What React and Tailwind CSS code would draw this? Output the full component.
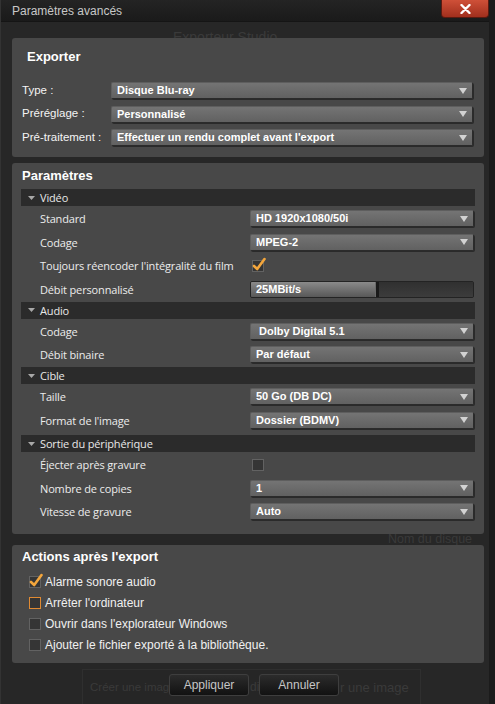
import React from "react";

const SEGOE = "font-['Open_Sans','Noto_Sans',sans-serif] text-[11px] tracking-[-0.15px]";

function Arrow() {
  return (
    <svg width="8" height="6" viewBox="0 0 8 6" className="shrink-0">
      <polygon points="0,0 8,0 4,6" fill="#d2d2d2" />
    </svg>
  );
}

function Dropdown({ value, wide, extraPad }) {
  return (
    <div
      className={`h-[17px] flex items-center justify-between rounded-[2px] border border-[#2b2b2b] border-t-[#5e5e5e] border-l-[#5e5e5e] bg-linear-to-b from-[#747474] to-[#616161] shadow-[1px_1px_0_#2a2a2a] pr-[5px] text-[11px] font-bold text-white font-['Liberation_Sans',Arial,sans-serif] leading-none ${
        extraPad ? "pl-[8px]" : "pl-[5px]"
      } ${wide ? "w-[362px]" : "w-[224px]"}`}
    >
      <span className="whitespace-nowrap">{value}</span>
      <Arrow />
    </div>
  );
}

function CheckMark() {
  return (
    <svg
      width="14"
      height="14"
      viewBox="0 0 14 14"
      className="absolute left-[-1px] top-[-4px]"
    >
      <path
        d="M2 9 L5.2 12 L12.5 2"
        fill="none"
        stroke="#f3a63c"
        strokeWidth="2.6"
        strokeLinecap="round"
        strokeLinejoin="round"
      />
    </svg>
  );
}

function Box({ checked, orange }) {
  return (
    <div
      className={`relative w-[12px] h-[12px] shrink-0 bg-[#353535] ${
        orange ? "border-[1.5px] border-[#e08a32]" : "border border-[#626262]"
      }`}
    >
      {checked && <CheckMark />}
    </div>
  );
}

function SectionHeader({ title }) {
  return (
    <div className="h-[17px] bg-[#2b2b2b] flex items-center pl-[7px]">
      <svg width="7" height="4" viewBox="0 0 7 4" className="shrink-0">
        <polygon points="0,0 7,0 3.5,4" fill="#a8a8a8" />
      </svg>
      <span className={`ml-[5px] text-[#e8e8e8] ${SEGOE} leading-none`}>{title}</span>
    </div>
  );
}

function Row({ label, children }) {
  return (
    <div className="h-[17px] flex items-center pl-[19px]">
      <div className={`w-[210px] text-[#ececec] whitespace-nowrap leading-none ${SEGOE}`}>{label}</div>
      {children}
    </div>
  );
}

function Rows({ children, pb }) {
  return (
    <div className={`flex flex-col gap-[6.5px] pt-[4px] ${pb || "pb-[4px]"}`}>{children}</div>
  );
}

function ExportRow({ label, value }) {
  return (
    <div className="h-[17px] flex items-center">
      <div className="w-[89px] text-[11.5px] text-[#f4f4f4] whitespace-nowrap leading-none">{label}</div>
      <Dropdown value={value} wide />
    </div>
  );
}

function ActionRow({ label, checked, orange }) {
  return (
    <div className="h-[21px] flex items-center pl-[7px]">
      <Box checked={checked} orange={orange} />
      <span className="ml-[4px] text-[12px] text-[#f0f0f0] whitespace-nowrap leading-none">{label}</span>
    </div>
  );
}

function Button({ children }) {
  return (
    <div className="w-[80px] h-[22px] flex items-center justify-center rounded-[3px] border border-[#3e3e3e] bg-linear-to-b from-[#2c2c2c] to-[#121212] text-[12px] text-[#c6c6c6] leading-none">
      {children}
    </div>
  );
}

function Ghost({ left, top, children, size }) {
  return (
    <div
      className={`absolute whitespace-nowrap leading-none text-[#3a3a3a] ${size}`}
      style={{ left, top }}
    >
      {children}
    </div>
  );
}

export default function App() {
  return (
    <div className="relative w-[495px] h-[704px] overflow-hidden bg-[#1c1c1c] font-['Liberation_Sans',Arial,sans-serif]">
      <div className="flex h-full">
        <div className="relative w-[489px] h-full bg-[#272727] border-l border-[#333333]">
          {/* faint background app showing through */}
          <div className="absolute inset-0 pointer-events-none">
            <Ghost left={172} top={30} size="text-[14px]">Exporteur Studio</Ghost>
            <Ghost left={387} top={533} size="text-[12.5px]">Nom du disque</Ghost>
            <div className="absolute left-[81px] top-[669px] w-[339px] h-[40px] border border-[#2f2f2f] bg-[#262626]" />
            <Ghost left={89} top={682} size="text-[11.5px]">Créer une imag</Ghost>
            <Ghost left={249} top={681} size="text-[12px]">di</Ghost>
            <Ghost left={339} top={681} size="text-[13px]">r une image</Ghost>
          </div>

          <div className="relative z-10 flex flex-col">
            {/* title bar */}
            <div className="h-[22px] flex items-start bg-linear-to-b from-[#242424] to-[#1a1a1a] border-b border-[#151515]">
              <div className="self-center pl-[11px] text-[12px] text-[#c8c8c8] whitespace-nowrap leading-none">
                Paramètres avancés
              </div>
              <div className="ml-auto mr-[0px] w-[48px] h-[18px] flex items-center justify-center rounded-b-[4px] border border-t-0 border-[#5a1a10] bg-linear-to-b from-[#cf5038] to-[#a12f1d]">
                <svg width="11" height="10" viewBox="0 0 11 10">
                  <path d="M1.5 1 L9.5 9 M9.5 1 L1.5 9" stroke="#ffffff" strokeWidth="2.4" strokeLinecap="round" />
                </svg>
              </div>
            </div>

            <div className="flex flex-col pl-[11px]">
              {/* Exporter */}
              <div className="mt-[16px] w-[472px] rounded-[3px] bg-[#484848] pt-[10px] pl-[10px] pr-[11px] pb-[11px]">
                <div className="h-[16px] flex items-center pl-[5px] text-[13px] font-bold text-white leading-none">
                  Exporter
                </div>
                <div className="mt-[18px] flex flex-col gap-[6.5px]">
                  <ExportRow label="Type :" value="Disque Blu-ray" />
                  <ExportRow label="Préréglage :" value="Personnalisé" />
                  <ExportRow label="Pré-traitement :" value="Effectuer un rendu complet avant l'export" />
                </div>
              </div>

              {/* Paramètres */}
              <div className="mt-[6px] w-[472px] rounded-[3px] bg-[#484848] pt-[4px] px-[9px] pb-[14px]">
                <div className="h-[16px] flex items-center pl-[1px] text-[13px] font-bold text-white leading-none">
                  Paramètres
                </div>
                <div className="mt-[6px] flex flex-col">
                  <SectionHeader title="Vidéo" />
                  <Rows>
                    <Row label="Standard">
                      <Dropdown value="HD 1920x1080/50i" />
                    </Row>
                    <Row label="Codage">
                      <Dropdown value="MPEG-2" />
                    </Row>
                    <Row label="Toujours réencoder l'intégralité du film">
                      <div className="ml-[2px]">
                        <Box checked />
                      </div>
                    </Row>
                    <Row label="Débit personnalisé">
                      <div className="w-[224px] h-[17px] flex rounded-[2px] border border-[#232323] bg-[#383838] overflow-hidden">
                        <div className="w-[124px] h-full flex items-center pl-[5px] bg-linear-to-b from-[#8a8a8a] to-[#585858] text-[11px] font-bold text-white leading-none">
                          25MBit/s
                        </div>
                        <div className="w-[4px] h-full bg-[#1a1a1a] border-l border-[#6a6a6a]" />
                        <div className="flex-1 h-full bg-linear-to-b from-[#303030] to-[#3c3c3c]" />
                      </div>
                    </Row>
                  </Rows>
                  <SectionHeader title="Audio" />
                  <Rows>
                    <Row label="Codage">
                      <Dropdown value="Dolby Digital 5.1" extraPad />
                    </Row>
                    <Row label="Débit binaire">
                      <Dropdown value="Par défaut" />
                    </Row>
                  </Rows>
                  <SectionHeader title="Cible" />
                  <Rows pb="pb-[6.5px]">
                    <Row label="Taille">
                      <Dropdown value="50 Go (DB DC)" />
                    </Row>
                    <Row label="Format de l'image">
                      <Dropdown value="Dossier (BDMV)" />
                    </Row>
                  </Rows>
                  <SectionHeader title="Sortie du périphérique" />
                  <Rows pb="pb-[0px]">
                    <Row label="Éjecter après gravure">
                      <div className="ml-[2px]">
                        <Box />
                      </div>
                    </Row>
                    <Row label="Nombre de copies">
                      <Dropdown value="1" />
                    </Row>
                    <Row label="Vitesse de gravure">
                      <Dropdown value="Auto" />
                    </Row>
                  </Rows>
                </div>
              </div>

              {/* Actions */}
              <div className="mt-[11px] w-[472px] rounded-[3px] bg-[#484848] pt-[3px] pl-[10px] pb-[8px]">
                <div className="h-[16px] flex items-center text-[13px] font-bold text-white leading-none">
                  Actions après l'export
                </div>
                <div className="mt-[7px] flex flex-col">
                  <ActionRow label="Alarme sonore audio" checked />
                  <ActionRow label="Arrêter l'ordinateur" orange />
                  <ActionRow label="Ouvrir dans l'explorateur Windows" />
                  <ActionRow label="Ajouter le fichier exporté à la bibliothèque." />
                </div>
              </div>

              {/* Buttons */}
              <div className="mt-[11px] flex gap-[10px] pl-[157px]">
                <Button>Appliquer</Button>
                <Button>Annuler</Button>
              </div>
            </div>
          </div>
        </div>
        <div className="flex-1 h-full bg-[#1b1b1b]" />
      </div>
    </div>
  );
}
